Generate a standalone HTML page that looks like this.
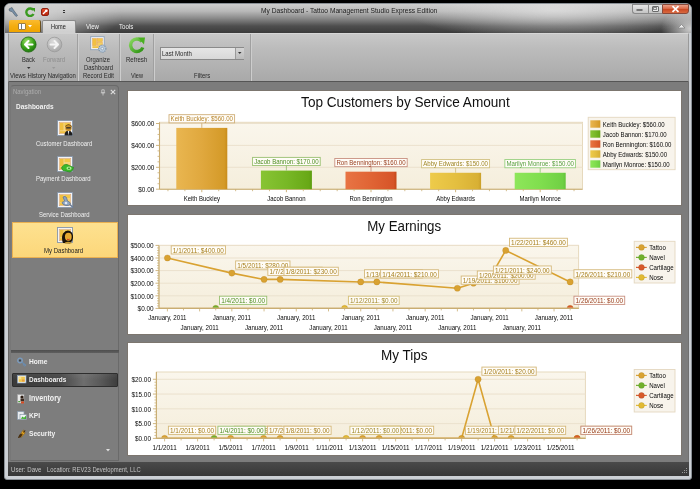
<!DOCTYPE html><html><head><meta charset="utf-8"><style>html,body{margin:0;padding:0}body{width:700px;height:489px;background:#000;position:relative;overflow:hidden;font-family:"Liberation Sans", sans-serif}div{box-sizing:border-box}</style></head><body><div style="position:absolute;left:0;top:0;width:700px;height:489px;will-change:transform"><div style="position:absolute;left:4.00px;top:3.00px;width:688.00px;height:477.00px;background:#ccd0d5;border-radius:6px 6px 3px 3px;border:1px solid #8a9096"></div><div style="position:absolute;left:5.00px;top:4.00px;width:686.00px;height:29.00px;background:linear-gradient(#cdcdcd 0%,#b8b8b8 25%,#888888 50%,#4e4e4e 76%,#3a3a3a 100%);border-radius:5px 5px 0 0"></div><div style="position:absolute;left:5.00px;top:4.00px;width:686.00px;height:29.00px;background:radial-gradient(ellipse 90px 30px at 4% 40%,rgba(215,215,215,0.9),rgba(215,215,215,0) 100%),radial-gradient(ellipse 150px 30px at 80% 20%,rgba(225,225,225,0.8),rgba(225,225,225,0) 100%),radial-gradient(ellipse 30px 22px at 100% 85%,rgba(215,215,215,0.95),rgba(215,215,215,0) 100%);border-radius:5px 5px 0 0"></div><div style="position:absolute;left:260.55px;top:5.88px;font-size:7.97px;line-height:9.57px;color:#1a1a1a;font-weight:normal;white-space:nowrap;transform:scaleX(0.8333);transform-origin:0 50%;">My Dashboard - Tattoo Management Studio Express Edition</div><div style="position:absolute;left:631.50px;top:3.50px;width:16.00px;height:10.50px;background:linear-gradient(#e8e8e8,#c4c4c4);border:1px solid #8a8a8a;border-right:none;border-radius:0 0 0 3px"></div><div style="position:absolute;left:636.00px;top:8.50px;width:7.00px;height:2.00px;background:#f8f8f8;border:1px solid #777;border-radius:1px"></div><div style="position:absolute;left:647.50px;top:3.50px;width:14.50px;height:10.50px;background:linear-gradient(#e8e8e8,#c4c4c4);border:1px solid #8a8a8a;border-right:none"></div><div style="position:absolute;left:651.50px;top:5.50px;width:7.00px;height:6.00px;border:1px solid #6a6a6a;background:#e8e8e8;border-radius:1px"></div><div style="position:absolute;left:653.30px;top:7.30px;width:3.40px;height:2.50px;border:1px solid #8a8a8a"></div><div style="position:absolute;left:662.00px;top:3.50px;width:26.50px;height:10.50px;background:linear-gradient(#eca088,#dc6a48 45%,#cc4a24 55%,#d86a40);border:1px solid #8a4a3a;border-radius:0 0 3px 0"></div><svg style="position:absolute;left:671px;top:4.5px" width="9" height="8"><path d="M1.5 1.2 L7.5 6.8 M7.5 1.2 L1.5 6.8" stroke="#fff" stroke-width="1.7"/></svg><svg style="position:absolute;left:677px;top:23px" width="9" height="6"><path d="M1 5 L4.5 1.5 L8 5 Z" fill="#eee" stroke="#888" stroke-width="0.8"/></svg><svg style="position:absolute;left:7px;top:6px" width="12" height="11"><path d="M2 3 L5 1.5 L6.5 4 L10.5 9.5 L9 10.5 L5 5.5 L2.5 5 Z" fill="#7890a8" stroke="#4a5a6a" stroke-width="0.6"/></svg><svg style="position:absolute;left:25px;top:6.5px" width="11" height="10"><path d="M8.2 3 A3.8 3.8 0 1 0 8.5 7" fill="none" stroke="#3a9a20" stroke-width="2.4"/><path d="M6 1 L10 1 L10 5 Z" fill="#3a9a20"/></svg><div style="position:absolute;left:40.50px;top:7.50px;width:8.50px;height:8.00px;background:linear-gradient(#e84a2a,#b82a10);border-radius:2px;border:1px solid #902010"></div><svg style="position:absolute;left:42px;top:9px" width="6" height="6"><path d="M1 5 L4.5 1.5" stroke="#fff" stroke-width="1.5"/><circle cx="4.3" cy="1.8" r="1.3" fill="#fff"/></svg><div style="position:absolute;left:62.50px;top:10.00px;width:2.50px;height:0.80px;background:#333"></div><div style="position:absolute;left:62.50px;top:12.00px;width:2.50px;height:0.80px;background:#333"></div><div style="position:absolute;left:8.50px;top:19.50px;width:32.00px;height:12.50px;background:linear-gradient(#fbbb30,#f4ad10 50%,#f0a400);border-radius:2px 2px 0 0;border-right:1px solid #6a5020"></div><div style="position:absolute;left:17.50px;top:22.50px;width:8.50px;height:7.00px;background:#fff;border:1px solid #a08040;border-radius:1px"></div><div style="position:absolute;left:21.00px;top:23.50px;width:1.00px;height:5.00px;background:#6a7a8a"></div><svg style="position:absolute;left:27.5px;top:25px" width="5" height="3"><path d="M0 0 L4 0 L2 2.5 Z" fill="#fff"/></svg><div style="position:absolute;left:42.00px;top:20.00px;width:33.50px;height:13.00px;background:linear-gradient(#e2e2e2,#cdcdcd);border:1px solid #8a8a8a;border-bottom:none;border-radius:2px 2px 0 0"></div><div style="position:absolute;left:50.65px;top:22.81px;font-size:6.70px;line-height:8.04px;color:#222;font-weight:normal;white-space:nowrap;transform:scaleX(0.8333);transform-origin:0 50%;">Home</div><div style="position:absolute;left:86.00px;top:22.69px;font-size:7.26px;line-height:8.71px;color:#f4f4f4;font-weight:normal;white-space:nowrap;transform:scaleX(0.8333);transform-origin:0 50%;">View</div><div style="position:absolute;left:119.35px;top:22.64px;font-size:7.35px;line-height:8.82px;color:#f4f4f4;font-weight:normal;white-space:nowrap;transform:scaleX(0.8333);transform-origin:0 50%;">Tools</div><div style="position:absolute;left:8.00px;top:32.50px;width:681.00px;height:49.00px;background:linear-gradient(#c8c8c8,#bcbcbc 30%,#a9a9a9 100%);border-top:1px solid #d6d6d6;border-bottom:1px solid #555;border-left:1px solid #9a9a9a;border-right:1px solid #9a9a9a"></div><div style="position:absolute;left:43.00px;top:32.00px;width:31.50px;height:2.00px;background:#d0d0d0"></div><div style="position:absolute;left:77.00px;top:34.00px;width:1.00px;height:46.50px;background:#a0a0a0"></div><div style="position:absolute;left:78.00px;top:34.00px;width:1.00px;height:46.50px;background:#cdcdcd"></div><div style="position:absolute;left:119.00px;top:34.00px;width:1.00px;height:46.50px;background:#a0a0a0"></div><div style="position:absolute;left:120.00px;top:34.00px;width:1.00px;height:46.50px;background:#cdcdcd"></div><div style="position:absolute;left:153.00px;top:34.00px;width:1.00px;height:46.50px;background:#a0a0a0"></div><div style="position:absolute;left:154.00px;top:34.00px;width:1.00px;height:46.50px;background:#cdcdcd"></div><div style="position:absolute;left:250.00px;top:34.00px;width:1.00px;height:46.50px;background:#a0a0a0"></div><div style="position:absolute;left:251.00px;top:34.00px;width:1.00px;height:46.50px;background:#cdcdcd"></div><svg style="position:absolute;left:20px;top:35.8px" width="17" height="17"><defs><radialGradient id="gb" cx="40%" cy="30%" r="70%"><stop offset="0" stop-color="#9ee06a"/><stop offset="0.6" stop-color="#3ca41a"/><stop offset="1" stop-color="#207a10"/></radialGradient></defs><circle cx="8.5" cy="8.5" r="7.6" fill="url(#gb)" stroke="#1e6a0e" stroke-width="0.8"/><path d="M12.5 8.5 H5.5 M8.5 5 L5 8.5 L8.5 12" fill="none" stroke="#fff" stroke-width="2.1" stroke-linecap="round" stroke-linejoin="round"/></svg><svg style="position:absolute;left:45.7px;top:35.8px" width="17" height="17"><defs><radialGradient id="gf" cx="40%" cy="30%" r="70%"><stop offset="0" stop-color="#dcdcdc"/><stop offset="1" stop-color="#a8a8a8"/></radialGradient></defs><circle cx="8.5" cy="8.5" r="7.3" fill="url(#gf)" stroke="#9a9a9a" stroke-width="0.8"/><path d="M4.5 8.5 H11.5 M8.5 5 L12 8.5 L8.5 12" fill="none" stroke="#f4f4f4" stroke-width="2" stroke-linecap="round" stroke-linejoin="round"/></svg><div style="position:absolute;left:21.75px;top:56.26px;font-size:6.96px;line-height:8.36px;color:#2a2a2a;font-weight:normal;white-space:nowrap;transform:scaleX(0.8333);transform-origin:0 50%;">Back</div><div style="position:absolute;left:42.90px;top:56.09px;font-size:7.26px;line-height:8.72px;color:#8e8e8e;font-weight:normal;white-space:nowrap;transform:scaleX(0.8333);transform-origin:0 50%;">Forward</div><svg style="position:absolute;left:26.5px;top:66.5px" width="4" height="3"><path d="M0 0 L3.5 0 L1.75 2 Z" fill="#333"/></svg><svg style="position:absolute;left:52px;top:66.5px" width="4" height="3"><path d="M0 0 L3.5 0 L1.75 2 Z" fill="#999"/></svg><div style="position:absolute;left:9.70px;top:72.14px;font-size:7.17px;line-height:8.61px;color:#2a2a2a;font-weight:normal;white-space:nowrap;transform:scaleX(0.8333);transform-origin:0 50%;">Views History Navigation</div><svg style="position:absolute;left:90px;top:36px" width="18" height="18"><rect x="0.7" y="0.7" width="13.5" height="13" fill="#f6f6f6" stroke="#8aa0b8" stroke-width="0.9"/><rect x="2.2" y="2.2" width="10.5" height="10" fill="#f6dc98"/><rect x="2.6" y="2.6" width="3.8" height="7" fill="#f2c040" stroke="#e0a060" stroke-width="0.4"/><rect x="7.2" y="2.6" width="5.2" height="3" fill="#f4c848" stroke="#e0a060" stroke-width="0.4"/><rect x="7.2" y="6.3" width="5.2" height="3" fill="#f4d060" stroke="#e0a060" stroke-width="0.4"/><rect x="2.6" y="10.3" width="6" height="1.7" fill="#f0c040"/><circle cx="12.3" cy="12.6" r="3.6" fill="#b8c8d8" stroke="#7890a8" stroke-width="1.1" stroke-dasharray="1.2 0.9"/><circle cx="12.3" cy="12.6" r="1.3" fill="#e8eef4" stroke="#7890a8" stroke-width="0.6"/></svg><div style="position:absolute;left:86.20px;top:56.38px;font-size:7.10px;line-height:8.52px;color:#2a2a2a;font-weight:normal;white-space:nowrap;transform:scaleX(0.8333);transform-origin:0 50%;">Organize</div><div style="position:absolute;left:83.70px;top:63.95px;font-size:7.16px;line-height:8.60px;color:#2a2a2a;font-weight:normal;white-space:nowrap;transform:scaleX(0.8333);transform-origin:0 50%;">Dashboard</div><div style="position:absolute;left:83.00px;top:72.17px;font-size:7.12px;line-height:8.54px;color:#2a2a2a;font-weight:normal;white-space:nowrap;transform:scaleX(0.8333);transform-origin:0 50%;">Record Edit</div><svg style="position:absolute;left:127.5px;top:36px" width="18" height="18"><defs><linearGradient id="gr" x1="0" y1="0" x2="1" y2="1"><stop offset="0" stop-color="#8ad860"/><stop offset="1" stop-color="#2a9010"/></linearGradient></defs><path d="M14 5.5 A6.3 6.3 0 1 0 14.8 11.5" fill="none" stroke="url(#gr)" stroke-width="3.4"/><path d="M10 1.5 L17 1.5 L16 8.5 Z" fill="#4ab020"/></svg><div style="position:absolute;left:125.80px;top:56.29px;font-size:7.27px;line-height:8.72px;color:#2a2a2a;font-weight:normal;white-space:nowrap;transform:scaleX(0.8333);transform-origin:0 50%;">Refresh</div><div style="position:absolute;left:130.90px;top:72.41px;font-size:6.70px;line-height:8.04px;color:#2a2a2a;font-weight:normal;white-space:nowrap;transform:scaleX(0.8333);transform-origin:0 50%;">View</div><div style="position:absolute;left:160.00px;top:47.00px;width:84.00px;height:12.50px;background:linear-gradient(#e6e6e6,#d8d8d8);border:1px solid #8a8a8a"></div><div style="position:absolute;left:235.00px;top:47.50px;width:8.50px;height:11.50px;background:linear-gradient(#d4d4d4,#bcbcbc);border-left:1px solid #9a9a9a"></div><svg style="position:absolute;left:237.5px;top:52px" width="4" height="3"><path d="M0 0 L3.5 0 L1.75 2 Z" fill="#333"/></svg><div style="position:absolute;left:162.10px;top:49.71px;font-size:7.23px;line-height:8.67px;color:#2a2a2a;font-weight:normal;white-space:nowrap;transform:scaleX(0.8333);transform-origin:0 50%;">Last Month</div><div style="position:absolute;left:194.20px;top:72.16px;font-size:7.14px;line-height:8.57px;color:#2a2a2a;font-weight:normal;white-space:nowrap;transform:scaleX(0.8333);transform-origin:0 50%;">Filters</div><div style="position:absolute;left:8.00px;top:81.50px;width:681.00px;height:380.50px;background:#7c7c7c;border-left:1px solid #666;border-right:1px solid #707070"></div><div style="position:absolute;left:9.50px;top:84.50px;width:109.80px;height:376.50px;background:#7d7d7d;border:1px solid #6a6a6a;border-left-color:#777;border-radius:4px 4px 0 0"></div><div style="position:absolute;left:12.90px;top:88.05px;font-size:7.16px;line-height:8.59px;color:#acacac;font-weight:normal;white-space:nowrap;transform:scaleX(0.8333);transform-origin:0 50%;">Navigation</div><svg style="position:absolute;left:99.5px;top:88.5px" width="6" height="7"><path d="M1.8 0.8 H4.2 V3.8 H1.8 Z M0.8 3.8 H5.2 M3 3.8 V6.5" fill="none" stroke="#cfcfcf" stroke-width="0.8"/></svg><svg style="position:absolute;left:109.5px;top:89px" width="6" height="6"><path d="M0.8 0.8 L5.2 5.2 M5.2 0.8 L0.8 5.2" stroke="#dedede" stroke-width="1.1"/></svg><div style="position:absolute;left:16.30px;top:101.67px;font-size:7.81px;line-height:9.37px;color:#f2f2f2;font-weight:bold;white-space:nowrap;transform:scaleX(0.8333);transform-origin:0 50%;">Dashboards</div><svg style="position:absolute;left:56.5px;top:119.5px;overflow:visible" width="17" height="17"><rect x="0.5" y="0.5" width="15" height="15" fill="#f6f8fa" stroke="#8796a8" stroke-width="0.9"/><rect x="2.2" y="2.2" width="11.6" height="11.6" fill="#f2dca0" stroke="#d89a70" stroke-width="0.5"/><rect x="3" y="3" width="3.6" height="7.5" fill="#f0c040"/><rect x="7.4" y="3" width="5.6" height="3.4" fill="#f2c848"/><rect x="7.4" y="7.2" width="5.6" height="3.3" fill="#f4d070"/><rect x="3" y="11.2" width="10" height="1.8" fill="#f0c040"/><path d="M7.5 15.5 Q7.5 11 11.5 10.5 Q15.5 11 15.5 15.5 Z" fill="#1e1e1e"/><path d="M10.8 11 L11.5 15.5 L12.2 11 Z" fill="#f0f0f0"/><circle cx="11.5" cy="7.8" r="3.2" fill="#c8902a"/><path d="M8.3 7 Q11.5 3.2 14.7 7 L14.7 6 Q11.5 2.5 8.3 6 Z" fill="#6a4a10"/><rect x="9.2" y="7.2" width="4.6" height="1.3" fill="#2a2a2a"/></svg><div style="position:absolute;left:35.50px;top:139.67px;font-size:7.12px;line-height:8.55px;color:#f0f0f0;font-weight:normal;white-space:nowrap;transform:scaleX(0.8333);transform-origin:0 50%;">Customer Dashboard</div><svg style="position:absolute;left:56.5px;top:155.5px;overflow:visible" width="17" height="17"><rect x="0.5" y="0.5" width="15" height="15" fill="#f6f8fa" stroke="#8796a8" stroke-width="0.9"/><rect x="2.2" y="2.2" width="11.6" height="11.6" fill="#f2dca0" stroke="#d89a70" stroke-width="0.5"/><rect x="3" y="3" width="3.6" height="7.5" fill="#f0c040"/><rect x="7.4" y="3" width="5.6" height="3.4" fill="#f2c848"/><rect x="7.4" y="7.2" width="5.6" height="3.3" fill="#f4d070"/><rect x="3" y="11.2" width="10" height="1.8" fill="#f0c040"/><path d="M4.5 12 Q6 8 10 8.5 L16.5 11.5 Q16 15 13 16 L6 14.5 Z" fill="#3cb82a" stroke="#208a18" stroke-width="0.7"/><ellipse cx="12" cy="12.3" rx="2.6" ry="1.8" fill="#a8f090"/><circle cx="12" cy="12.3" r="0.9" fill="#2a8a20"/></svg><div style="position:absolute;left:36.40px;top:175.03px;font-size:7.19px;line-height:8.62px;color:#f0f0f0;font-weight:normal;white-space:nowrap;transform:scaleX(0.8333);transform-origin:0 50%;">Payment Dashboard</div><svg style="position:absolute;left:56.5px;top:191.5px;overflow:visible" width="17" height="17"><rect x="0.5" y="0.5" width="15" height="15" fill="#f6f8fa" stroke="#8796a8" stroke-width="0.9"/><rect x="2.2" y="2.2" width="11.6" height="11.6" fill="#f2dca0" stroke="#d89a70" stroke-width="0.5"/><rect x="3" y="3" width="3.6" height="7.5" fill="#f0c040"/><rect x="7.4" y="3" width="5.6" height="3.4" fill="#f2c848"/><rect x="7.4" y="7.2" width="5.6" height="3.3" fill="#f4d070"/><rect x="3" y="11.2" width="10" height="1.8" fill="#f0c040"/><path d="M6 5 Q8 3.5 9.5 5.5 L10.5 9 Q13 9.5 13.5 12 Q12 14 9 13.5 Q5.5 13 5 10.5 Q6.5 9.5 7.5 9 Z" fill="#8ea4c0" stroke="#5a6e8a" stroke-width="0.7"/><circle cx="9" cy="11" r="1.3" fill="#dfe8f4"/><path d="M13 12.5 L16 15.5" stroke="#6a7e9a" stroke-width="1.4"/></svg><div style="position:absolute;left:38.85px;top:211.07px;font-size:7.13px;line-height:8.55px;color:#f0f0f0;font-weight:normal;white-space:nowrap;transform:scaleX(0.8333);transform-origin:0 50%;">Service Dashboard</div><div style="position:absolute;left:11.80px;top:222.00px;width:106.00px;height:35.80px;background:linear-gradient(#fde190,#fcd77a);border:1px solid #eab050"></div><svg style="position:absolute;left:56.5px;top:227.0px;overflow:visible" width="17" height="17"><rect x="0.5" y="0.5" width="15" height="15" fill="#f6f8fa" stroke="#8796a8" stroke-width="0.9"/><rect x="2.2" y="2.2" width="11.6" height="11.6" fill="#f2dca0" stroke="#d89a70" stroke-width="0.5"/><rect x="3" y="3" width="3.6" height="7.5" fill="#f0c040"/><rect x="7.4" y="3" width="5.6" height="3.4" fill="#f2c848"/><rect x="7.4" y="7.2" width="5.6" height="3.3" fill="#f4d070"/><rect x="3" y="11.2" width="10" height="1.8" fill="#f0c040"/><path d="M6 16 Q4 11 6 6.5 Q9 2.5 13 4 Q16.5 6 16 11 Q15.5 15 13 16.5 Z" fill="#1a1208"/><ellipse cx="11.3" cy="9.8" rx="3.4" ry="4" fill="#e6a830"/><path d="M10 12.2 Q11.3 13 12.6 12.2" stroke="#d83a20" stroke-width="1"/><path d="M8 15.5 Q11 14 14.5 15.5 L14.5 16.5 L8 16.5 Z" fill="#c89a30"/></svg><div style="position:absolute;left:44.00px;top:246.60px;font-size:7.23px;line-height:8.68px;color:#222;font-weight:normal;white-space:nowrap;transform:scaleX(0.8333);transform-origin:0 50%;">My Dashboard</div><div style="position:absolute;left:10.50px;top:350.30px;width:108.00px;height:2.50px;background:linear-gradient(#4e4e4e,#5e5e5e)"></div><div style="position:absolute;left:12.00px;top:372.50px;width:106.00px;height:14.50px;background:linear-gradient(rgba(255,255,255,0.06),rgba(255,255,255,0) 50%),linear-gradient(90deg,#3a3a3a,#464646 45%,#6e6e6e 68%,#585858 85%,#3e3e3e);border:1px solid #2e2e2e;border-radius:1px"></div><svg style="position:absolute;left:16.5px;top:356.5px" width="10" height="10"><circle cx="3" cy="3.5" r="2.3" fill="none" stroke="#7a9cc0" stroke-width="1.3"/><circle cx="3" cy="3.5" r="0.9" fill="#2a3a4a"/><path d="M4.8 5 L9 8.5 M7 7 L6 8.5 M8.3 8 L7.5 9.5" stroke="#6a8cb0" stroke-width="1.1"/></svg><svg style="position:absolute;left:16.5px;top:375.0px" width="10" height="10"><rect x="0.5" y="0.5" width="8.5" height="7.5" fill="#f4f6f8" stroke="#8aa0b8" stroke-width="0.7"/><rect x="1.6" y="1.6" width="6.3" height="5.3" fill="#f0c850"/><rect x="2" y="2" width="2.3" height="2.3" fill="#f8e090"/><rect x="5" y="4.5" width="2.5" height="2" fill="#e89a40"/></svg><svg style="position:absolute;left:17.0px;top:393.5px" width="10" height="10"><rect x="0.5" y="0.5" width="6.5" height="8.5" fill="#e8e8e8" stroke="#a0a0a0" stroke-width="0.6"/><circle cx="5" cy="3" r="1.6" fill="#2a1a10"/><rect x="3.5" y="4.5" width="3.5" height="3" fill="#3a2a20"/><rect x="4" y="7.5" width="3" height="2" fill="#d84a20"/><rect x="1.2" y="7" width="2" height="1.2" fill="#50a040"/></svg><svg style="position:absolute;left:16.5px;top:410.5px" width="10" height="10"><rect x="0.5" y="0.5" width="6.5" height="8" fill="#e8ecf0" stroke="#8898a8" stroke-width="0.7"/><rect x="3" y="3.5" width="6.5" height="5" fill="#f0f4f8" stroke="#7a8a9a" stroke-width="0.6"/><path d="M3.8 7.8 L5.5 5.5 L7 6.8 L9 4.5 L9 8 Z" fill="#40b030"/></svg><svg style="position:absolute;left:17.0px;top:428.5px" width="10" height="10"><path d="M1 8.5 Q2 5 4.5 4 L6.5 2 L8.5 1 L7.5 4 L5.5 6.5 Q3.5 9 1 9 Z" fill="#4a3010"/><path d="M6.5 0.8 L3.8 4.8 L5.8 4.8 L4.2 8.6 L8.2 3.6 L6.2 3.6 Z" fill="#f0b020" stroke="#8a5a10" stroke-width="0.4"/></svg><div style="position:absolute;left:29.00px;top:357.37px;font-size:7.99px;line-height:9.59px;color:#f2f2f2;font-weight:bold;white-space:nowrap;transform:scaleX(0.8333);transform-origin:0 50%;">Home</div><div style="position:absolute;left:29.00px;top:375.21px;font-size:7.74px;line-height:9.29px;color:#f2f2f2;font-weight:bold;white-space:nowrap;transform:scaleX(0.8333);transform-origin:0 50%;">Dashboards</div><div style="position:absolute;left:29.00px;top:392.67px;font-size:8.50px;line-height:10.21px;color:#f2f2f2;font-weight:bold;white-space:nowrap;transform:scaleX(0.8333);transform-origin:0 50%;">Inventory</div><div style="position:absolute;left:29.00px;top:411.11px;font-size:7.92px;line-height:9.50px;color:#f2f2f2;font-weight:bold;white-space:nowrap;transform:scaleX(0.8333);transform-origin:0 50%;">KPI</div><div style="position:absolute;left:29.00px;top:428.98px;font-size:7.97px;line-height:9.56px;color:#f2f2f2;font-weight:bold;white-space:nowrap;transform:scaleX(0.8333);transform-origin:0 50%;">Security</div><svg style="position:absolute;left:106px;top:449px" width="5" height="3"><path d="M0 0 L4 0 L2 2.5 Z" fill="#e0e0e0"/></svg><div style="position:absolute;left:126.50px;top:89.50px;width:555.00px;height:116.50px;background:#fff;border:1px solid #7c766f"></div><div style="position:absolute;left:126.50px;top:213.50px;width:555.00px;height:121.00px;background:#fff;border:1px solid #7c766f"></div><div style="position:absolute;left:126.50px;top:342.00px;width:555.00px;height:113.50px;background:#fff;border:1px solid #7c766f"></div><svg style="position:absolute;left:0;top:0;font-family:'Liberation Sans',sans-serif;will-change:transform" width="700" height="489"><defs><linearGradient id="pbg" x1="0" y1="0" x2="0" y2="1"><stop offset="0" stop-color="#faf6ec"/><stop offset="1" stop-color="#f5eedc"/></linearGradient><linearGradient id="bk" x1="0" y1="0" x2="1" y2="0"><stop offset="0" stop-color="#e9b650"/><stop offset="0.5" stop-color="#e0a83e"/><stop offset="0.94" stop-color="#d49a28"/><stop offset="1" stop-color="#c88c1c"/></linearGradient><linearGradient id="bj" x1="0" y1="0" x2="1" y2="0"><stop offset="0" stop-color="#88c434"/><stop offset="0.5" stop-color="#78b826"/><stop offset="0.94" stop-color="#68a816"/><stop offset="1" stop-color="#5c9c10"/></linearGradient><linearGradient id="br" x1="0" y1="0" x2="1" y2="0"><stop offset="0" stop-color="#e87444"/><stop offset="0.5" stop-color="#e06434"/><stop offset="0.94" stop-color="#d65428"/><stop offset="1" stop-color="#c44818"/></linearGradient><linearGradient id="ba" x1="0" y1="0" x2="1" y2="0"><stop offset="0" stop-color="#eecb4a"/><stop offset="0.5" stop-color="#e4bf40"/><stop offset="0.94" stop-color="#d8b034"/><stop offset="1" stop-color="#caa02a"/></linearGradient><linearGradient id="bm" x1="0" y1="0" x2="1" y2="0"><stop offset="0" stop-color="#8ee65a"/><stop offset="0.5" stop-color="#80de4e"/><stop offset="0.94" stop-color="#70d044"/><stop offset="1" stop-color="#64c43a"/></linearGradient><clipPath id="clip2"><rect x="159" y="245.4" width="419.6" height="62.4"/></clipPath><clipPath id="clip3"><rect x="156.4" y="372" width="429" height="65.8"/></clipPath></defs><text x="405.40" y="107.42" font-size="14.50" fill="#111" text-anchor="middle" font-weight="normal" textLength="208.60" lengthAdjust="spacingAndGlyphs">Top Customers by Service Amount</text><rect x="159.50" y="122.30" width="423.00" height="66.90" fill="url(#pbg)" stroke="#e6d9bd" stroke-width="1"/><line x1="159.50" y1="167.30" x2="582.50" y2="167.30" stroke="#ebe1cd" stroke-width="1"/><line x1="159.50" y1="145.40" x2="582.50" y2="145.40" stroke="#ebe1cd" stroke-width="1"/><line x1="159.50" y1="123.50" x2="582.50" y2="123.50" stroke="#ebe1cd" stroke-width="1"/><text x="154.30" y="191.96" font-size="7.68" fill="#0a0a0a" text-anchor="end" font-weight="normal" textLength="16.02" lengthAdjust="spacingAndGlyphs">$0.00</text><line x1="156" y1="189.20" x2="159.50" y2="189.20" stroke="#c9ad72" stroke-width="0.9"/><text x="154.30" y="170.06" font-size="7.68" fill="#0a0a0a" text-anchor="end" font-weight="normal" textLength="23.13" lengthAdjust="spacingAndGlyphs">$200.00</text><line x1="156" y1="167.30" x2="159.50" y2="167.30" stroke="#c9ad72" stroke-width="0.9"/><text x="154.30" y="148.16" font-size="7.68" fill="#0a0a0a" text-anchor="end" font-weight="normal" textLength="23.13" lengthAdjust="spacingAndGlyphs">$400.00</text><line x1="156" y1="145.40" x2="159.50" y2="145.40" stroke="#c9ad72" stroke-width="0.9"/><text x="154.30" y="126.26" font-size="7.68" fill="#0a0a0a" text-anchor="end" font-weight="normal" textLength="23.13" lengthAdjust="spacingAndGlyphs">$600.00</text><line x1="156" y1="123.50" x2="159.50" y2="123.50" stroke="#c9ad72" stroke-width="0.9"/><line x1="157.5" y1="183.72" x2="159.50" y2="183.72" stroke="#c9ad72" stroke-width="0.8"/><line x1="157.5" y1="178.25" x2="159.50" y2="178.25" stroke="#c9ad72" stroke-width="0.8"/><line x1="157.5" y1="172.77" x2="159.50" y2="172.77" stroke="#c9ad72" stroke-width="0.8"/><line x1="157.5" y1="161.82" x2="159.50" y2="161.82" stroke="#c9ad72" stroke-width="0.8"/><line x1="157.5" y1="156.35" x2="159.50" y2="156.35" stroke="#c9ad72" stroke-width="0.8"/><line x1="157.5" y1="150.88" x2="159.50" y2="150.88" stroke="#c9ad72" stroke-width="0.8"/><line x1="157.5" y1="139.93" x2="159.50" y2="139.93" stroke="#c9ad72" stroke-width="0.8"/><line x1="157.5" y1="134.45" x2="159.50" y2="134.45" stroke="#c9ad72" stroke-width="0.8"/><line x1="157.5" y1="128.97" x2="159.50" y2="128.97" stroke="#c9ad72" stroke-width="0.8"/><line x1="159.50" y1="122.30" x2="159.50" y2="189.20" stroke="#c9ad72" stroke-width="1.1"/><line x1="159.50" y1="189.20" x2="582.50" y2="189.20" stroke="#c9ad72" stroke-width="1.1"/><rect x="176.30" y="127.88" width="51.00" height="61.32" fill="url(#bk)"/><text x="201.80" y="200.99" font-size="7.20" fill="#0a0a0a" text-anchor="middle" font-weight="normal" textLength="36.35" lengthAdjust="spacingAndGlyphs">Keith Buckley</text><line x1="201.80" y1="189.20" x2="201.80" y2="192.20" stroke="#c9ad72" stroke-width="0.9"/><line x1="167.96" y1="189.20" x2="167.96" y2="191.20" stroke="#c9ad72" stroke-width="0.8"/><line x1="184.88" y1="189.20" x2="184.88" y2="191.20" stroke="#c9ad72" stroke-width="0.8"/><line x1="218.72" y1="189.20" x2="218.72" y2="191.20" stroke="#c9ad72" stroke-width="0.8"/><line x1="235.64" y1="189.20" x2="235.64" y2="191.20" stroke="#c9ad72" stroke-width="0.8"/><line x1="201.80" y1="122.88" x2="201.80" y2="127.88" stroke="#d0b07a" stroke-width="0.9"/><rect x="169.00" y="114.68" width="65.60" height="8.20" fill="#fffdf8" fill-opacity="0.92" stroke="#d0b07a" stroke-width="0.9"/><text x="170.60" y="121.42" font-size="7.32" fill="#b8862e" text-anchor="start" font-weight="normal" textLength="62.40" lengthAdjust="spacingAndGlyphs">Keith Buckley: $560.00</text><rect x="260.90" y="170.58" width="51.00" height="18.62" fill="url(#bj)"/><text x="286.40" y="200.99" font-size="7.20" fill="#0a0a0a" text-anchor="middle" font-weight="normal" textLength="38.36" lengthAdjust="spacingAndGlyphs">Jacob Bannon</text><line x1="286.40" y1="189.20" x2="286.40" y2="192.20" stroke="#c9ad72" stroke-width="0.9"/><line x1="252.56" y1="189.20" x2="252.56" y2="191.20" stroke="#c9ad72" stroke-width="0.8"/><line x1="269.48" y1="189.20" x2="269.48" y2="191.20" stroke="#c9ad72" stroke-width="0.8"/><line x1="303.32" y1="189.20" x2="303.32" y2="191.20" stroke="#c9ad72" stroke-width="0.8"/><line x1="320.24" y1="189.20" x2="320.24" y2="191.20" stroke="#c9ad72" stroke-width="0.8"/><line x1="286.40" y1="165.58" x2="286.40" y2="170.58" stroke="#98c070" stroke-width="0.9"/><rect x="252.58" y="157.38" width="67.64" height="8.20" fill="#fffdf8" fill-opacity="0.92" stroke="#98c070" stroke-width="0.9"/><text x="254.18" y="164.12" font-size="7.32" fill="#4e8e22" text-anchor="start" font-weight="normal" textLength="64.44" lengthAdjust="spacingAndGlyphs">Jacob Bannon: $170.00</text><rect x="345.50" y="171.68" width="51.00" height="17.52" fill="url(#br)"/><text x="371.00" y="200.99" font-size="7.20" fill="#0a0a0a" text-anchor="middle" font-weight="normal" textLength="43.03" lengthAdjust="spacingAndGlyphs">Ron Bennington</text><line x1="371.00" y1="189.20" x2="371.00" y2="192.20" stroke="#c9ad72" stroke-width="0.9"/><line x1="337.16" y1="189.20" x2="337.16" y2="191.20" stroke="#c9ad72" stroke-width="0.8"/><line x1="354.08" y1="189.20" x2="354.08" y2="191.20" stroke="#c9ad72" stroke-width="0.8"/><line x1="387.92" y1="189.20" x2="387.92" y2="191.20" stroke="#c9ad72" stroke-width="0.8"/><line x1="404.84" y1="189.20" x2="404.84" y2="191.20" stroke="#c9ad72" stroke-width="0.8"/><line x1="371.00" y1="166.68" x2="371.00" y2="171.68" stroke="#c89080" stroke-width="0.9"/><rect x="334.80" y="158.48" width="72.39" height="8.20" fill="#fffdf8" fill-opacity="0.92" stroke="#c89080" stroke-width="0.9"/><text x="336.40" y="165.22" font-size="7.32" fill="#9a4020" text-anchor="start" font-weight="normal" textLength="69.19" lengthAdjust="spacingAndGlyphs">Ron Bennington: $160.00</text><rect x="430.10" y="172.77" width="51.00" height="16.43" fill="url(#ba)"/><text x="455.60" y="200.99" font-size="7.20" fill="#0a0a0a" text-anchor="middle" font-weight="normal" textLength="38.69" lengthAdjust="spacingAndGlyphs">Abby Edwards</text><line x1="455.60" y1="189.20" x2="455.60" y2="192.20" stroke="#c9ad72" stroke-width="0.9"/><line x1="421.76" y1="189.20" x2="421.76" y2="191.20" stroke="#c9ad72" stroke-width="0.8"/><line x1="438.68" y1="189.20" x2="438.68" y2="191.20" stroke="#c9ad72" stroke-width="0.8"/><line x1="472.52" y1="189.20" x2="472.52" y2="191.20" stroke="#c9ad72" stroke-width="0.8"/><line x1="489.44" y1="189.20" x2="489.44" y2="191.20" stroke="#c9ad72" stroke-width="0.8"/><line x1="455.60" y1="167.77" x2="455.60" y2="172.77" stroke="#d0c080" stroke-width="0.9"/><rect x="421.61" y="159.57" width="67.97" height="8.20" fill="#fffdf8" fill-opacity="0.92" stroke="#d0c080" stroke-width="0.9"/><text x="423.21" y="166.31" font-size="7.32" fill="#a08828" text-anchor="start" font-weight="normal" textLength="64.77" lengthAdjust="spacingAndGlyphs">Abby Edwards: $150.00</text><rect x="514.70" y="172.77" width="51.00" height="16.43" fill="url(#bm)"/><text x="540.20" y="200.99" font-size="7.20" fill="#0a0a0a" text-anchor="middle" font-weight="normal" textLength="41.35" lengthAdjust="spacingAndGlyphs">Marilyn Monroe</text><line x1="540.20" y1="189.20" x2="540.20" y2="192.20" stroke="#c9ad72" stroke-width="0.9"/><line x1="506.36" y1="189.20" x2="506.36" y2="191.20" stroke="#c9ad72" stroke-width="0.8"/><line x1="523.28" y1="189.20" x2="523.28" y2="191.20" stroke="#c9ad72" stroke-width="0.8"/><line x1="557.12" y1="189.20" x2="557.12" y2="191.20" stroke="#c9ad72" stroke-width="0.8"/><line x1="574.04" y1="189.20" x2="574.04" y2="191.20" stroke="#c9ad72" stroke-width="0.8"/><line x1="540.20" y1="167.77" x2="540.20" y2="172.77" stroke="#98d080" stroke-width="0.9"/><rect x="504.86" y="159.57" width="70.68" height="8.20" fill="#fffdf8" fill-opacity="0.92" stroke="#98d080" stroke-width="0.9"/><text x="506.46" y="166.31" font-size="7.32" fill="#58a040" text-anchor="start" font-weight="normal" textLength="67.48" lengthAdjust="spacingAndGlyphs">Marilyn Monroe: $150.00</text><rect x="588.2" y="117.3" width="86.9" height="52.4" fill="#f8f4ec" stroke="#e4d8c0" stroke-width="0.9"/><rect x="590.3" y="120.30" width="10" height="7.4" fill="url(#bk)"/><text x="602.80" y="126.61" font-size="7.26" fill="#0a0a0a" text-anchor="start" font-weight="normal" textLength="61.89" lengthAdjust="spacingAndGlyphs">Keith Buckley: $560.00</text><rect x="590.3" y="130.30" width="10" height="7.4" fill="url(#bj)"/><text x="602.80" y="136.61" font-size="7.26" fill="#0a0a0a" text-anchor="start" font-weight="normal" textLength="63.91" lengthAdjust="spacingAndGlyphs">Jacob Bannon: $170.00</text><rect x="590.3" y="140.30" width="10" height="7.4" fill="url(#br)"/><text x="602.80" y="146.61" font-size="7.26" fill="#0a0a0a" text-anchor="start" font-weight="normal" textLength="68.62" lengthAdjust="spacingAndGlyphs">Ron Bennington: $160.00</text><rect x="590.3" y="150.30" width="10" height="7.4" fill="url(#ba)"/><text x="602.80" y="156.61" font-size="7.26" fill="#0a0a0a" text-anchor="start" font-weight="normal" textLength="64.24" lengthAdjust="spacingAndGlyphs">Abby Edwards: $150.00</text><rect x="590.3" y="160.30" width="10" height="7.4" fill="url(#bm)"/><text x="602.80" y="166.61" font-size="7.26" fill="#0a0a0a" text-anchor="start" font-weight="normal" textLength="66.92" lengthAdjust="spacingAndGlyphs">Marilyn Monroe: $150.00</text><text x="404.20" y="230.72" font-size="14.23" fill="#111" text-anchor="middle" font-weight="normal" textLength="73.92" lengthAdjust="spacingAndGlyphs">My Earnings</text><rect x="159.00" y="245.40" width="419.60" height="63.00" fill="url(#pbg)" stroke="#e6d9bd" stroke-width="1"/><line x1="159.00" y1="295.80" x2="578.60" y2="295.80" stroke="#ebe1cd" stroke-width="1"/><line x1="159.00" y1="283.20" x2="578.60" y2="283.20" stroke="#ebe1cd" stroke-width="1"/><line x1="159.00" y1="270.60" x2="578.60" y2="270.60" stroke="#ebe1cd" stroke-width="1"/><line x1="159.00" y1="258.00" x2="578.60" y2="258.00" stroke="#ebe1cd" stroke-width="1"/><line x1="159.00" y1="245.40" x2="578.60" y2="245.40" stroke="#ebe1cd" stroke-width="1"/><text x="153.60" y="311.16" font-size="7.68" fill="#0a0a0a" text-anchor="end" font-weight="normal" textLength="16.02" lengthAdjust="spacingAndGlyphs">$0.00</text><line x1="155.50" y1="308.40" x2="159.00" y2="308.40" stroke="#c9ad72" stroke-width="0.9"/><line x1="157.00" y1="305.88" x2="159.00" y2="305.88" stroke="#c9ad72" stroke-width="0.7"/><line x1="157.00" y1="303.36" x2="159.00" y2="303.36" stroke="#c9ad72" stroke-width="0.7"/><line x1="157.00" y1="300.84" x2="159.00" y2="300.84" stroke="#c9ad72" stroke-width="0.7"/><line x1="157.00" y1="298.32" x2="159.00" y2="298.32" stroke="#c9ad72" stroke-width="0.7"/><text x="153.60" y="298.56" font-size="7.68" fill="#0a0a0a" text-anchor="end" font-weight="normal" textLength="23.13" lengthAdjust="spacingAndGlyphs">$100.00</text><line x1="155.50" y1="295.80" x2="159.00" y2="295.80" stroke="#c9ad72" stroke-width="0.9"/><line x1="157.00" y1="293.28" x2="159.00" y2="293.28" stroke="#c9ad72" stroke-width="0.7"/><line x1="157.00" y1="290.76" x2="159.00" y2="290.76" stroke="#c9ad72" stroke-width="0.7"/><line x1="157.00" y1="288.24" x2="159.00" y2="288.24" stroke="#c9ad72" stroke-width="0.7"/><line x1="157.00" y1="285.72" x2="159.00" y2="285.72" stroke="#c9ad72" stroke-width="0.7"/><text x="153.60" y="285.96" font-size="7.68" fill="#0a0a0a" text-anchor="end" font-weight="normal" textLength="23.13" lengthAdjust="spacingAndGlyphs">$200.00</text><line x1="155.50" y1="283.20" x2="159.00" y2="283.20" stroke="#c9ad72" stroke-width="0.9"/><line x1="157.00" y1="280.68" x2="159.00" y2="280.68" stroke="#c9ad72" stroke-width="0.7"/><line x1="157.00" y1="278.16" x2="159.00" y2="278.16" stroke="#c9ad72" stroke-width="0.7"/><line x1="157.00" y1="275.64" x2="159.00" y2="275.64" stroke="#c9ad72" stroke-width="0.7"/><line x1="157.00" y1="273.12" x2="159.00" y2="273.12" stroke="#c9ad72" stroke-width="0.7"/><text x="153.60" y="273.36" font-size="7.68" fill="#0a0a0a" text-anchor="end" font-weight="normal" textLength="23.13" lengthAdjust="spacingAndGlyphs">$300.00</text><line x1="155.50" y1="270.60" x2="159.00" y2="270.60" stroke="#c9ad72" stroke-width="0.9"/><line x1="157.00" y1="268.08" x2="159.00" y2="268.08" stroke="#c9ad72" stroke-width="0.7"/><line x1="157.00" y1="265.56" x2="159.00" y2="265.56" stroke="#c9ad72" stroke-width="0.7"/><line x1="157.00" y1="263.04" x2="159.00" y2="263.04" stroke="#c9ad72" stroke-width="0.7"/><line x1="157.00" y1="260.52" x2="159.00" y2="260.52" stroke="#c9ad72" stroke-width="0.7"/><text x="153.60" y="260.76" font-size="7.68" fill="#0a0a0a" text-anchor="end" font-weight="normal" textLength="23.13" lengthAdjust="spacingAndGlyphs">$400.00</text><line x1="155.50" y1="258.00" x2="159.00" y2="258.00" stroke="#c9ad72" stroke-width="0.9"/><line x1="157.00" y1="255.48" x2="159.00" y2="255.48" stroke="#c9ad72" stroke-width="0.7"/><line x1="157.00" y1="252.96" x2="159.00" y2="252.96" stroke="#c9ad72" stroke-width="0.7"/><line x1="157.00" y1="250.44" x2="159.00" y2="250.44" stroke="#c9ad72" stroke-width="0.7"/><line x1="157.00" y1="247.92" x2="159.00" y2="247.92" stroke="#c9ad72" stroke-width="0.7"/><text x="153.60" y="248.16" font-size="7.68" fill="#0a0a0a" text-anchor="end" font-weight="normal" textLength="23.13" lengthAdjust="spacingAndGlyphs">$500.00</text><line x1="155.50" y1="245.40" x2="159.00" y2="245.40" stroke="#c9ad72" stroke-width="0.9"/><line x1="159.00" y1="245.40" x2="159.00" y2="308.40" stroke="#c9ad72" stroke-width="1.1"/><line x1="159.00" y1="308.40" x2="578.60" y2="308.40" stroke="#c9ad72" stroke-width="1.1"/><line x1="167.40" y1="308.40" x2="167.40" y2="311.40" stroke="#c9ad72" stroke-width="0.8"/><line x1="183.51" y1="308.40" x2="183.51" y2="310.40" stroke="#c9ad72" stroke-width="0.8"/><line x1="199.62" y1="308.40" x2="199.62" y2="311.40" stroke="#c9ad72" stroke-width="0.8"/><line x1="215.73" y1="308.40" x2="215.73" y2="310.40" stroke="#c9ad72" stroke-width="0.8"/><line x1="231.84" y1="308.40" x2="231.84" y2="311.40" stroke="#c9ad72" stroke-width="0.8"/><line x1="247.95" y1="308.40" x2="247.95" y2="310.40" stroke="#c9ad72" stroke-width="0.8"/><line x1="264.06" y1="308.40" x2="264.06" y2="311.40" stroke="#c9ad72" stroke-width="0.8"/><line x1="280.17" y1="308.40" x2="280.17" y2="310.40" stroke="#c9ad72" stroke-width="0.8"/><line x1="296.28" y1="308.40" x2="296.28" y2="311.40" stroke="#c9ad72" stroke-width="0.8"/><line x1="312.39" y1="308.40" x2="312.39" y2="310.40" stroke="#c9ad72" stroke-width="0.8"/><line x1="328.50" y1="308.40" x2="328.50" y2="311.40" stroke="#c9ad72" stroke-width="0.8"/><line x1="344.61" y1="308.40" x2="344.61" y2="310.40" stroke="#c9ad72" stroke-width="0.8"/><line x1="360.72" y1="308.40" x2="360.72" y2="311.40" stroke="#c9ad72" stroke-width="0.8"/><line x1="376.83" y1="308.40" x2="376.83" y2="310.40" stroke="#c9ad72" stroke-width="0.8"/><line x1="392.94" y1="308.40" x2="392.94" y2="311.40" stroke="#c9ad72" stroke-width="0.8"/><line x1="409.05" y1="308.40" x2="409.05" y2="310.40" stroke="#c9ad72" stroke-width="0.8"/><line x1="425.16" y1="308.40" x2="425.16" y2="311.40" stroke="#c9ad72" stroke-width="0.8"/><line x1="441.27" y1="308.40" x2="441.27" y2="310.40" stroke="#c9ad72" stroke-width="0.8"/><line x1="457.38" y1="308.40" x2="457.38" y2="311.40" stroke="#c9ad72" stroke-width="0.8"/><line x1="473.49" y1="308.40" x2="473.49" y2="310.40" stroke="#c9ad72" stroke-width="0.8"/><line x1="489.60" y1="308.40" x2="489.60" y2="311.40" stroke="#c9ad72" stroke-width="0.8"/><line x1="505.71" y1="308.40" x2="505.71" y2="310.40" stroke="#c9ad72" stroke-width="0.8"/><line x1="521.82" y1="308.40" x2="521.82" y2="311.40" stroke="#c9ad72" stroke-width="0.8"/><line x1="537.93" y1="308.40" x2="537.93" y2="310.40" stroke="#c9ad72" stroke-width="0.8"/><line x1="554.04" y1="308.40" x2="554.04" y2="311.40" stroke="#c9ad72" stroke-width="0.8"/><line x1="570.15" y1="308.40" x2="570.15" y2="310.40" stroke="#c9ad72" stroke-width="0.8"/><text x="167.40" y="319.58" font-size="7.44" fill="#0a0a0a" text-anchor="middle" font-weight="normal" textLength="38.37" lengthAdjust="spacingAndGlyphs">January, 2011</text><text x="199.62" y="329.78" font-size="7.44" fill="#0a0a0a" text-anchor="middle" font-weight="normal" textLength="38.37" lengthAdjust="spacingAndGlyphs">January, 2011</text><text x="231.84" y="319.58" font-size="7.44" fill="#0a0a0a" text-anchor="middle" font-weight="normal" textLength="38.37" lengthAdjust="spacingAndGlyphs">January, 2011</text><text x="264.06" y="329.78" font-size="7.44" fill="#0a0a0a" text-anchor="middle" font-weight="normal" textLength="38.37" lengthAdjust="spacingAndGlyphs">January, 2011</text><text x="296.28" y="319.58" font-size="7.44" fill="#0a0a0a" text-anchor="middle" font-weight="normal" textLength="38.37" lengthAdjust="spacingAndGlyphs">January, 2011</text><text x="328.50" y="329.78" font-size="7.44" fill="#0a0a0a" text-anchor="middle" font-weight="normal" textLength="38.37" lengthAdjust="spacingAndGlyphs">January, 2011</text><text x="360.72" y="319.58" font-size="7.44" fill="#0a0a0a" text-anchor="middle" font-weight="normal" textLength="38.37" lengthAdjust="spacingAndGlyphs">January, 2011</text><text x="392.94" y="329.78" font-size="7.44" fill="#0a0a0a" text-anchor="middle" font-weight="normal" textLength="38.37" lengthAdjust="spacingAndGlyphs">January, 2011</text><text x="425.16" y="319.58" font-size="7.44" fill="#0a0a0a" text-anchor="middle" font-weight="normal" textLength="38.37" lengthAdjust="spacingAndGlyphs">January, 2011</text><text x="457.38" y="329.78" font-size="7.44" fill="#0a0a0a" text-anchor="middle" font-weight="normal" textLength="38.37" lengthAdjust="spacingAndGlyphs">January, 2011</text><text x="489.60" y="319.58" font-size="7.44" fill="#0a0a0a" text-anchor="middle" font-weight="normal" textLength="38.37" lengthAdjust="spacingAndGlyphs">January, 2011</text><text x="521.82" y="329.78" font-size="7.44" fill="#0a0a0a" text-anchor="middle" font-weight="normal" textLength="38.37" lengthAdjust="spacingAndGlyphs">January, 2011</text><text x="554.04" y="319.58" font-size="7.44" fill="#0a0a0a" text-anchor="middle" font-weight="normal" textLength="38.37" lengthAdjust="spacingAndGlyphs">January, 2011</text><g clip-path="url(#clip2)"><polyline points="167.40,258.00 231.84,273.12 264.06,279.42 280.17,279.42 360.72,281.94 376.83,281.94 457.38,288.24 473.49,283.20 489.60,278.16 505.71,250.44 570.15,281.94" fill="none" stroke="#d9a232" stroke-width="1.6" stroke-linejoin="round"/><circle cx="167.40" cy="258.00" r="3.1" fill="#d9a232" stroke="#b07a18" stroke-width="0.5" stroke-opacity="0.5"/><circle cx="231.84" cy="273.12" r="3.1" fill="#d9a232" stroke="#b07a18" stroke-width="0.5" stroke-opacity="0.5"/><circle cx="264.06" cy="279.42" r="3.1" fill="#d9a232" stroke="#b07a18" stroke-width="0.5" stroke-opacity="0.5"/><circle cx="280.17" cy="279.42" r="3.1" fill="#d9a232" stroke="#b07a18" stroke-width="0.5" stroke-opacity="0.5"/><circle cx="360.72" cy="281.94" r="3.1" fill="#d9a232" stroke="#b07a18" stroke-width="0.5" stroke-opacity="0.5"/><circle cx="376.83" cy="281.94" r="3.1" fill="#d9a232" stroke="#b07a18" stroke-width="0.5" stroke-opacity="0.5"/><circle cx="457.38" cy="288.24" r="3.1" fill="#d9a232" stroke="#b07a18" stroke-width="0.5" stroke-opacity="0.5"/><circle cx="473.49" cy="283.20" r="3.1" fill="#d9a232" stroke="#b07a18" stroke-width="0.5" stroke-opacity="0.5"/><circle cx="489.60" cy="278.16" r="3.1" fill="#d9a232" stroke="#b07a18" stroke-width="0.5" stroke-opacity="0.5"/><circle cx="505.71" cy="250.44" r="3.1" fill="#d9a232" stroke="#b07a18" stroke-width="0.5" stroke-opacity="0.5"/><circle cx="570.15" cy="281.94" r="3.1" fill="#d9a232" stroke="#b07a18" stroke-width="0.5" stroke-opacity="0.5"/><circle cx="215.73" cy="308.40" r="3.1" fill="#72b02c" stroke="#b07a18" stroke-width="0.5" stroke-opacity="0.5"/><circle cx="570.15" cy="308.40" r="3.1" fill="#d85a2a" stroke="#b07a18" stroke-width="0.5" stroke-opacity="0.5"/><circle cx="344.61" cy="308.40" r="3.1" fill="#e2ba32" stroke="#b07a18" stroke-width="0.5" stroke-opacity="0.5"/></g><line x1="159.00" y1="308.40" x2="578.60" y2="308.40" stroke="#c9ad72" stroke-width="1.1"/><rect x="171.20" y="245.80" width="54.33" height="8.20" fill="#fffdf8" fill-opacity="0.92" stroke="#d4b87a" stroke-width="0.9"/><text x="172.80" y="252.66" font-size="7.68" fill="#a8801e" text-anchor="start" font-weight="normal" textLength="51.13" lengthAdjust="spacingAndGlyphs">1/1/2011: $400.00</text><rect x="235.64" y="260.92" width="54.33" height="8.20" fill="#fffdf8" fill-opacity="0.92" stroke="#d4b87a" stroke-width="0.9"/><text x="237.24" y="267.78" font-size="7.68" fill="#a8801e" text-anchor="start" font-weight="normal" textLength="51.13" lengthAdjust="spacingAndGlyphs">1/5/2011: $280.00</text><rect x="267.86" y="267.22" width="54.33" height="8.20" fill="#fffdf8" fill-opacity="0.92" stroke="#d4b87a" stroke-width="0.9"/><text x="269.46" y="274.08" font-size="7.68" fill="#a8801e" text-anchor="start" font-weight="normal" textLength="51.13" lengthAdjust="spacingAndGlyphs">1/7/2011: $230.00</text><rect x="283.97" y="267.22" width="54.33" height="8.20" fill="#fffdf8" fill-opacity="0.92" stroke="#d4b87a" stroke-width="0.9"/><text x="285.57" y="274.08" font-size="7.68" fill="#a8801e" text-anchor="start" font-weight="normal" textLength="51.13" lengthAdjust="spacingAndGlyphs">1/8/2011: $230.00</text><rect x="364.52" y="269.74" width="57.89" height="8.20" fill="#fffdf8" fill-opacity="0.92" stroke="#d4b87a" stroke-width="0.9"/><text x="366.12" y="276.60" font-size="7.68" fill="#a8801e" text-anchor="start" font-weight="normal" textLength="54.69" lengthAdjust="spacingAndGlyphs">1/13/2011: $210.00</text><rect x="380.63" y="269.74" width="57.89" height="8.20" fill="#fffdf8" fill-opacity="0.92" stroke="#d4b87a" stroke-width="0.9"/><text x="382.23" y="276.60" font-size="7.68" fill="#a8801e" text-anchor="start" font-weight="normal" textLength="54.69" lengthAdjust="spacingAndGlyphs">1/14/2011: $210.00</text><rect x="461.18" y="276.04" width="57.89" height="8.20" fill="#fffdf8" fill-opacity="0.92" stroke="#d4b87a" stroke-width="0.9"/><text x="462.78" y="282.90" font-size="7.68" fill="#a8801e" text-anchor="start" font-weight="normal" textLength="54.69" lengthAdjust="spacingAndGlyphs">1/19/2011: $160.00</text><rect x="477.29" y="271.00" width="57.89" height="8.20" fill="#fffdf8" fill-opacity="0.92" stroke="#d4b87a" stroke-width="0.9"/><text x="478.89" y="277.86" font-size="7.68" fill="#a8801e" text-anchor="start" font-weight="normal" textLength="54.69" lengthAdjust="spacingAndGlyphs">1/20/2011: $200.00</text><rect x="493.40" y="265.96" width="57.89" height="8.20" fill="#fffdf8" fill-opacity="0.92" stroke="#d4b87a" stroke-width="0.9"/><text x="495.00" y="272.82" font-size="7.68" fill="#a8801e" text-anchor="start" font-weight="normal" textLength="54.69" lengthAdjust="spacingAndGlyphs">1/21/2011: $240.00</text><rect x="509.51" y="238.24" width="57.89" height="8.20" fill="#fffdf8" fill-opacity="0.92" stroke="#d4b87a" stroke-width="0.9"/><text x="511.11" y="245.10" font-size="7.68" fill="#a8801e" text-anchor="start" font-weight="normal" textLength="54.69" lengthAdjust="spacingAndGlyphs">1/22/2011: $460.00</text><rect x="573.95" y="269.74" width="57.89" height="8.20" fill="#fffdf8" fill-opacity="0.92" stroke="#d4b87a" stroke-width="0.9"/><text x="575.55" y="276.60" font-size="7.68" fill="#a8801e" text-anchor="start" font-weight="normal" textLength="54.69" lengthAdjust="spacingAndGlyphs">1/26/2011: $210.00</text><rect x="219.53" y="296.20" width="47.21" height="8.20" fill="#fffdf8" fill-opacity="0.92" stroke="#98c070" stroke-width="0.9"/><text x="221.13" y="303.06" font-size="7.68" fill="#4e8e22" text-anchor="start" font-weight="normal" textLength="44.01" lengthAdjust="spacingAndGlyphs">1/4/2011: $0.00</text><rect x="573.95" y="296.20" width="50.77" height="8.20" fill="#fffdf8" fill-opacity="0.92" stroke="#c89080" stroke-width="0.9"/><text x="575.55" y="303.06" font-size="7.68" fill="#9a4020" text-anchor="start" font-weight="normal" textLength="47.57" lengthAdjust="spacingAndGlyphs">1/26/2011: $0.00</text><rect x="348.41" y="296.20" width="50.77" height="8.20" fill="#fffdf8" fill-opacity="0.92" stroke="#d4c07a" stroke-width="0.9"/><text x="350.01" y="303.06" font-size="7.68" fill="#a08828" text-anchor="start" font-weight="normal" textLength="47.57" lengthAdjust="spacingAndGlyphs">1/12/2011: $0.00</text><rect x="634.20" y="241.30" width="40.80" height="41.70" fill="#f8f4ec" stroke="#e4d8c0" stroke-width="0.9"/><line x1="636.00" y1="247.40" x2="646.80" y2="247.40" stroke="#d9a232" stroke-width="1.1"/><circle cx="641.50" cy="247.40" r="2.9" fill="#d9a232" stroke="#a8801e" stroke-width="0.5" stroke-opacity="0.6"/><text x="649.20" y="250.04" font-size="7.32" fill="#0a0a0a" text-anchor="start" font-weight="normal" textLength="16.62" lengthAdjust="spacingAndGlyphs">Tattoo</text><line x1="636.00" y1="257.40" x2="646.80" y2="257.40" stroke="#72b02c" stroke-width="1.1"/><circle cx="641.50" cy="257.40" r="2.9" fill="#72b02c" stroke="#4e8e22" stroke-width="0.5" stroke-opacity="0.6"/><text x="649.20" y="260.04" font-size="7.32" fill="#0a0a0a" text-anchor="start" font-weight="normal" textLength="15.60" lengthAdjust="spacingAndGlyphs">Navel</text><line x1="636.00" y1="267.40" x2="646.80" y2="267.40" stroke="#d85a2a" stroke-width="1.1"/><circle cx="641.50" cy="267.40" r="2.9" fill="#d85a2a" stroke="#9a4020" stroke-width="0.5" stroke-opacity="0.6"/><text x="649.20" y="270.04" font-size="7.32" fill="#0a0a0a" text-anchor="start" font-weight="normal" textLength="24.41" lengthAdjust="spacingAndGlyphs">Cartilage</text><line x1="636.00" y1="277.40" x2="646.80" y2="277.40" stroke="#e2ba32" stroke-width="1.1"/><circle cx="641.50" cy="277.40" r="2.9" fill="#e2ba32" stroke="#a08828" stroke-width="0.5" stroke-opacity="0.6"/><text x="649.20" y="280.04" font-size="7.32" fill="#0a0a0a" text-anchor="start" font-weight="normal" textLength="14.24" lengthAdjust="spacingAndGlyphs">Nose</text><text x="404.20" y="359.78" font-size="14.39" fill="#111" text-anchor="middle" font-weight="normal" textLength="46.58" lengthAdjust="spacingAndGlyphs">My Tips</text><rect x="156.40" y="372.00" width="429.00" height="66.40" fill="url(#pbg)" stroke="#e6d9bd" stroke-width="1"/><line x1="156.40" y1="423.62" x2="585.40" y2="423.62" stroke="#ebe1cd" stroke-width="1"/><line x1="156.40" y1="408.84" x2="585.40" y2="408.84" stroke="#ebe1cd" stroke-width="1"/><line x1="156.40" y1="394.06" x2="585.40" y2="394.06" stroke="#ebe1cd" stroke-width="1"/><line x1="156.40" y1="379.28" x2="585.40" y2="379.28" stroke="#ebe1cd" stroke-width="1"/><text x="151.00" y="441.16" font-size="7.68" fill="#0a0a0a" text-anchor="end" font-weight="normal" textLength="16.02" lengthAdjust="spacingAndGlyphs">$0.00</text><line x1="152.90" y1="438.40" x2="156.40" y2="438.40" stroke="#c9ad72" stroke-width="0.9"/><line x1="154.40" y1="435.44" x2="156.40" y2="435.44" stroke="#c9ad72" stroke-width="0.7"/><line x1="154.40" y1="432.49" x2="156.40" y2="432.49" stroke="#c9ad72" stroke-width="0.7"/><line x1="154.40" y1="429.53" x2="156.40" y2="429.53" stroke="#c9ad72" stroke-width="0.7"/><line x1="154.40" y1="426.58" x2="156.40" y2="426.58" stroke="#c9ad72" stroke-width="0.7"/><text x="151.00" y="426.38" font-size="7.68" fill="#0a0a0a" text-anchor="end" font-weight="normal" textLength="16.02" lengthAdjust="spacingAndGlyphs">$5.00</text><line x1="152.90" y1="423.62" x2="156.40" y2="423.62" stroke="#c9ad72" stroke-width="0.9"/><line x1="154.40" y1="420.66" x2="156.40" y2="420.66" stroke="#c9ad72" stroke-width="0.7"/><line x1="154.40" y1="417.71" x2="156.40" y2="417.71" stroke="#c9ad72" stroke-width="0.7"/><line x1="154.40" y1="414.75" x2="156.40" y2="414.75" stroke="#c9ad72" stroke-width="0.7"/><line x1="154.40" y1="411.80" x2="156.40" y2="411.80" stroke="#c9ad72" stroke-width="0.7"/><text x="151.00" y="411.60" font-size="7.68" fill="#0a0a0a" text-anchor="end" font-weight="normal" textLength="19.58" lengthAdjust="spacingAndGlyphs">$10.00</text><line x1="152.90" y1="408.84" x2="156.40" y2="408.84" stroke="#c9ad72" stroke-width="0.9"/><line x1="154.40" y1="405.88" x2="156.40" y2="405.88" stroke="#c9ad72" stroke-width="0.7"/><line x1="154.40" y1="402.93" x2="156.40" y2="402.93" stroke="#c9ad72" stroke-width="0.7"/><line x1="154.40" y1="399.97" x2="156.40" y2="399.97" stroke="#c9ad72" stroke-width="0.7"/><line x1="154.40" y1="397.02" x2="156.40" y2="397.02" stroke="#c9ad72" stroke-width="0.7"/><text x="151.00" y="396.82" font-size="7.68" fill="#0a0a0a" text-anchor="end" font-weight="normal" textLength="19.58" lengthAdjust="spacingAndGlyphs">$15.00</text><line x1="152.90" y1="394.06" x2="156.40" y2="394.06" stroke="#c9ad72" stroke-width="0.9"/><line x1="154.40" y1="391.10" x2="156.40" y2="391.10" stroke="#c9ad72" stroke-width="0.7"/><line x1="154.40" y1="388.15" x2="156.40" y2="388.15" stroke="#c9ad72" stroke-width="0.7"/><line x1="154.40" y1="385.19" x2="156.40" y2="385.19" stroke="#c9ad72" stroke-width="0.7"/><line x1="154.40" y1="382.24" x2="156.40" y2="382.24" stroke="#c9ad72" stroke-width="0.7"/><text x="151.00" y="382.04" font-size="7.68" fill="#0a0a0a" text-anchor="end" font-weight="normal" textLength="19.58" lengthAdjust="spacingAndGlyphs">$20.00</text><line x1="152.90" y1="379.28" x2="156.40" y2="379.28" stroke="#c9ad72" stroke-width="0.9"/><line x1="156.40" y1="372.00" x2="156.40" y2="438.40" stroke="#c9ad72" stroke-width="1.1"/><line x1="156.40" y1="438.40" x2="585.40" y2="438.40" stroke="#c9ad72" stroke-width="1.1"/><line x1="164.60" y1="438.40" x2="164.60" y2="441.40" stroke="#c9ad72" stroke-width="0.8"/><line x1="181.10" y1="438.40" x2="181.10" y2="440.40" stroke="#c9ad72" stroke-width="0.8"/><line x1="197.60" y1="438.40" x2="197.60" y2="441.40" stroke="#c9ad72" stroke-width="0.8"/><line x1="214.10" y1="438.40" x2="214.10" y2="440.40" stroke="#c9ad72" stroke-width="0.8"/><line x1="230.60" y1="438.40" x2="230.60" y2="441.40" stroke="#c9ad72" stroke-width="0.8"/><line x1="247.10" y1="438.40" x2="247.10" y2="440.40" stroke="#c9ad72" stroke-width="0.8"/><line x1="263.60" y1="438.40" x2="263.60" y2="441.40" stroke="#c9ad72" stroke-width="0.8"/><line x1="280.10" y1="438.40" x2="280.10" y2="440.40" stroke="#c9ad72" stroke-width="0.8"/><line x1="296.60" y1="438.40" x2="296.60" y2="441.40" stroke="#c9ad72" stroke-width="0.8"/><line x1="313.10" y1="438.40" x2="313.10" y2="440.40" stroke="#c9ad72" stroke-width="0.8"/><line x1="329.60" y1="438.40" x2="329.60" y2="441.40" stroke="#c9ad72" stroke-width="0.8"/><line x1="346.10" y1="438.40" x2="346.10" y2="440.40" stroke="#c9ad72" stroke-width="0.8"/><line x1="362.60" y1="438.40" x2="362.60" y2="441.40" stroke="#c9ad72" stroke-width="0.8"/><line x1="379.10" y1="438.40" x2="379.10" y2="440.40" stroke="#c9ad72" stroke-width="0.8"/><line x1="395.60" y1="438.40" x2="395.60" y2="441.40" stroke="#c9ad72" stroke-width="0.8"/><line x1="412.10" y1="438.40" x2="412.10" y2="440.40" stroke="#c9ad72" stroke-width="0.8"/><line x1="428.60" y1="438.40" x2="428.60" y2="441.40" stroke="#c9ad72" stroke-width="0.8"/><line x1="445.10" y1="438.40" x2="445.10" y2="440.40" stroke="#c9ad72" stroke-width="0.8"/><line x1="461.60" y1="438.40" x2="461.60" y2="441.40" stroke="#c9ad72" stroke-width="0.8"/><line x1="478.10" y1="438.40" x2="478.10" y2="440.40" stroke="#c9ad72" stroke-width="0.8"/><line x1="494.60" y1="438.40" x2="494.60" y2="441.40" stroke="#c9ad72" stroke-width="0.8"/><line x1="511.10" y1="438.40" x2="511.10" y2="440.40" stroke="#c9ad72" stroke-width="0.8"/><line x1="527.60" y1="438.40" x2="527.60" y2="441.40" stroke="#c9ad72" stroke-width="0.8"/><line x1="544.10" y1="438.40" x2="544.10" y2="440.40" stroke="#c9ad72" stroke-width="0.8"/><line x1="560.60" y1="438.40" x2="560.60" y2="441.40" stroke="#c9ad72" stroke-width="0.8"/><line x1="577.10" y1="438.40" x2="577.10" y2="440.40" stroke="#c9ad72" stroke-width="0.8"/><text x="164.60" y="450.34" font-size="7.61" fill="#0a0a0a" text-anchor="middle" font-weight="normal" textLength="24.21" lengthAdjust="spacingAndGlyphs">1/1/2011</text><text x="197.60" y="450.34" font-size="7.61" fill="#0a0a0a" text-anchor="middle" font-weight="normal" textLength="24.21" lengthAdjust="spacingAndGlyphs">1/3/2011</text><text x="230.60" y="450.34" font-size="7.61" fill="#0a0a0a" text-anchor="middle" font-weight="normal" textLength="24.21" lengthAdjust="spacingAndGlyphs">1/5/2011</text><text x="263.60" y="450.34" font-size="7.61" fill="#0a0a0a" text-anchor="middle" font-weight="normal" textLength="24.21" lengthAdjust="spacingAndGlyphs">1/7/2011</text><text x="296.60" y="450.34" font-size="7.61" fill="#0a0a0a" text-anchor="middle" font-weight="normal" textLength="24.21" lengthAdjust="spacingAndGlyphs">1/9/2011</text><text x="329.60" y="450.34" font-size="7.61" fill="#0a0a0a" text-anchor="middle" font-weight="normal" textLength="27.26" lengthAdjust="spacingAndGlyphs">1/11/2011</text><text x="362.60" y="450.34" font-size="7.61" fill="#0a0a0a" text-anchor="middle" font-weight="normal" textLength="27.73" lengthAdjust="spacingAndGlyphs">1/13/2011</text><text x="395.60" y="450.34" font-size="7.61" fill="#0a0a0a" text-anchor="middle" font-weight="normal" textLength="27.73" lengthAdjust="spacingAndGlyphs">1/15/2011</text><text x="428.60" y="450.34" font-size="7.61" fill="#0a0a0a" text-anchor="middle" font-weight="normal" textLength="27.73" lengthAdjust="spacingAndGlyphs">1/17/2011</text><text x="461.60" y="450.34" font-size="7.61" fill="#0a0a0a" text-anchor="middle" font-weight="normal" textLength="27.73" lengthAdjust="spacingAndGlyphs">1/19/2011</text><text x="494.60" y="450.34" font-size="7.61" fill="#0a0a0a" text-anchor="middle" font-weight="normal" textLength="27.73" lengthAdjust="spacingAndGlyphs">1/21/2011</text><text x="527.60" y="450.34" font-size="7.61" fill="#0a0a0a" text-anchor="middle" font-weight="normal" textLength="27.73" lengthAdjust="spacingAndGlyphs">1/23/2011</text><text x="560.60" y="450.34" font-size="7.61" fill="#0a0a0a" text-anchor="middle" font-weight="normal" textLength="27.73" lengthAdjust="spacingAndGlyphs">1/25/2011</text><g clip-path="url(#clip3)"><polyline points="164.60,438.40 230.60,438.40 263.60,438.40 280.10,438.40 362.60,438.40 379.10,438.40 461.60,438.40 478.10,379.28 494.60,438.40 511.10,438.40 577.10,438.40" fill="none" stroke="#d9a232" stroke-width="1.6" stroke-linejoin="round"/><circle cx="164.60" cy="438.40" r="3.1" fill="#d9a232" stroke="#b07a18" stroke-width="0.5" stroke-opacity="0.5"/><circle cx="230.60" cy="438.40" r="3.1" fill="#d9a232" stroke="#b07a18" stroke-width="0.5" stroke-opacity="0.5"/><circle cx="263.60" cy="438.40" r="3.1" fill="#d9a232" stroke="#b07a18" stroke-width="0.5" stroke-opacity="0.5"/><circle cx="280.10" cy="438.40" r="3.1" fill="#d9a232" stroke="#b07a18" stroke-width="0.5" stroke-opacity="0.5"/><circle cx="362.60" cy="438.40" r="3.1" fill="#d9a232" stroke="#b07a18" stroke-width="0.5" stroke-opacity="0.5"/><circle cx="379.10" cy="438.40" r="3.1" fill="#d9a232" stroke="#b07a18" stroke-width="0.5" stroke-opacity="0.5"/><circle cx="461.60" cy="438.40" r="3.1" fill="#d9a232" stroke="#b07a18" stroke-width="0.5" stroke-opacity="0.5"/><circle cx="478.10" cy="379.28" r="3.1" fill="#d9a232" stroke="#b07a18" stroke-width="0.5" stroke-opacity="0.5"/><circle cx="494.60" cy="438.40" r="3.1" fill="#d9a232" stroke="#b07a18" stroke-width="0.5" stroke-opacity="0.5"/><circle cx="511.10" cy="438.40" r="3.1" fill="#d9a232" stroke="#b07a18" stroke-width="0.5" stroke-opacity="0.5"/><circle cx="577.10" cy="438.40" r="3.1" fill="#d9a232" stroke="#b07a18" stroke-width="0.5" stroke-opacity="0.5"/><circle cx="214.10" cy="438.40" r="3.1" fill="#72b02c" stroke="#b07a18" stroke-width="0.5" stroke-opacity="0.5"/><circle cx="577.10" cy="438.40" r="3.1" fill="#d85a2a" stroke="#b07a18" stroke-width="0.5" stroke-opacity="0.5"/><circle cx="346.10" cy="438.40" r="3.1" fill="#e2ba32" stroke="#b07a18" stroke-width="0.5" stroke-opacity="0.5"/></g><line x1="156.40" y1="438.40" x2="585.40" y2="438.40" stroke="#c9ad72" stroke-width="1.1"/><rect x="168.40" y="426.20" width="47.21" height="8.20" fill="#fffdf8" fill-opacity="0.92" stroke="#d4b87a" stroke-width="0.9"/><text x="170.00" y="433.06" font-size="7.68" fill="#a8801e" text-anchor="start" font-weight="normal" textLength="44.01" lengthAdjust="spacingAndGlyphs">1/1/2011: $0.00</text><rect x="234.40" y="426.20" width="47.21" height="8.20" fill="#fffdf8" fill-opacity="0.92" stroke="#d4b87a" stroke-width="0.9"/><text x="236.00" y="433.06" font-size="7.68" fill="#a8801e" text-anchor="start" font-weight="normal" textLength="44.01" lengthAdjust="spacingAndGlyphs">1/5/2011: $0.00</text><rect x="267.40" y="426.20" width="47.21" height="8.20" fill="#fffdf8" fill-opacity="0.92" stroke="#d4b87a" stroke-width="0.9"/><text x="269.00" y="433.06" font-size="7.68" fill="#a8801e" text-anchor="start" font-weight="normal" textLength="44.01" lengthAdjust="spacingAndGlyphs">1/7/2011: $0.00</text><rect x="283.90" y="426.20" width="47.21" height="8.20" fill="#fffdf8" fill-opacity="0.92" stroke="#d4b87a" stroke-width="0.9"/><text x="285.50" y="433.06" font-size="7.68" fill="#a8801e" text-anchor="start" font-weight="normal" textLength="44.01" lengthAdjust="spacingAndGlyphs">1/8/2011: $0.00</text><rect x="366.40" y="426.20" width="50.77" height="8.20" fill="#fffdf8" fill-opacity="0.92" stroke="#d4b87a" stroke-width="0.9"/><text x="368.00" y="433.06" font-size="7.68" fill="#a8801e" text-anchor="start" font-weight="normal" textLength="47.57" lengthAdjust="spacingAndGlyphs">1/13/2011: $0.00</text><rect x="382.90" y="426.20" width="50.77" height="8.20" fill="#fffdf8" fill-opacity="0.92" stroke="#d4b87a" stroke-width="0.9"/><text x="384.50" y="433.06" font-size="7.68" fill="#a8801e" text-anchor="start" font-weight="normal" textLength="47.57" lengthAdjust="spacingAndGlyphs">1/14/2011: $0.00</text><rect x="465.40" y="426.20" width="50.77" height="8.20" fill="#fffdf8" fill-opacity="0.92" stroke="#d4b87a" stroke-width="0.9"/><text x="467.00" y="433.06" font-size="7.68" fill="#a8801e" text-anchor="start" font-weight="normal" textLength="47.57" lengthAdjust="spacingAndGlyphs">1/19/2011: $0.00</text><rect x="481.90" y="367.08" width="54.33" height="8.20" fill="#fffdf8" fill-opacity="0.92" stroke="#d4b87a" stroke-width="0.9"/><text x="483.50" y="373.94" font-size="7.68" fill="#a8801e" text-anchor="start" font-weight="normal" textLength="51.13" lengthAdjust="spacingAndGlyphs">1/20/2011: $20.00</text><rect x="498.40" y="426.20" width="50.77" height="8.20" fill="#fffdf8" fill-opacity="0.92" stroke="#d4b87a" stroke-width="0.9"/><text x="500.00" y="433.06" font-size="7.68" fill="#a8801e" text-anchor="start" font-weight="normal" textLength="47.57" lengthAdjust="spacingAndGlyphs">1/21/2011: $0.00</text><rect x="514.90" y="426.20" width="50.77" height="8.20" fill="#fffdf8" fill-opacity="0.92" stroke="#d4b87a" stroke-width="0.9"/><text x="516.50" y="433.06" font-size="7.68" fill="#a8801e" text-anchor="start" font-weight="normal" textLength="47.57" lengthAdjust="spacingAndGlyphs">1/22/2011: $0.00</text><rect x="580.90" y="426.20" width="50.77" height="8.20" fill="#fffdf8" fill-opacity="0.92" stroke="#d4b87a" stroke-width="0.9"/><text x="582.50" y="433.06" font-size="7.68" fill="#a8801e" text-anchor="start" font-weight="normal" textLength="47.57" lengthAdjust="spacingAndGlyphs">1/26/2011: $0.00</text><rect x="217.90" y="426.20" width="47.21" height="8.20" fill="#fffdf8" fill-opacity="0.92" stroke="#98c070" stroke-width="0.9"/><text x="219.50" y="433.06" font-size="7.68" fill="#4e8e22" text-anchor="start" font-weight="normal" textLength="44.01" lengthAdjust="spacingAndGlyphs">1/4/2011: $0.00</text><rect x="580.90" y="426.20" width="50.77" height="8.20" fill="#fffdf8" fill-opacity="0.92" stroke="#c89080" stroke-width="0.9"/><text x="582.50" y="433.06" font-size="7.68" fill="#9a4020" text-anchor="start" font-weight="normal" textLength="47.57" lengthAdjust="spacingAndGlyphs">1/26/2011: $0.00</text><rect x="349.90" y="426.20" width="50.77" height="8.20" fill="#fffdf8" fill-opacity="0.92" stroke="#d4c07a" stroke-width="0.9"/><text x="351.50" y="433.06" font-size="7.68" fill="#a08828" text-anchor="start" font-weight="normal" textLength="47.57" lengthAdjust="spacingAndGlyphs">1/12/2011: $0.00</text><rect x="634.20" y="369.50" width="40.80" height="42.50" fill="#f8f4ec" stroke="#e4d8c0" stroke-width="0.9"/><line x1="636.00" y1="375.40" x2="646.80" y2="375.40" stroke="#d9a232" stroke-width="1.1"/><circle cx="641.50" cy="375.40" r="2.9" fill="#d9a232" stroke="#a8801e" stroke-width="0.5" stroke-opacity="0.6"/><text x="649.20" y="378.04" font-size="7.32" fill="#0a0a0a" text-anchor="start" font-weight="normal" textLength="16.62" lengthAdjust="spacingAndGlyphs">Tattoo</text><line x1="636.00" y1="385.40" x2="646.80" y2="385.40" stroke="#72b02c" stroke-width="1.1"/><circle cx="641.50" cy="385.40" r="2.9" fill="#72b02c" stroke="#4e8e22" stroke-width="0.5" stroke-opacity="0.6"/><text x="649.20" y="388.04" font-size="7.32" fill="#0a0a0a" text-anchor="start" font-weight="normal" textLength="15.60" lengthAdjust="spacingAndGlyphs">Navel</text><line x1="636.00" y1="395.40" x2="646.80" y2="395.40" stroke="#d85a2a" stroke-width="1.1"/><circle cx="641.50" cy="395.40" r="2.9" fill="#d85a2a" stroke="#9a4020" stroke-width="0.5" stroke-opacity="0.6"/><text x="649.20" y="398.04" font-size="7.32" fill="#0a0a0a" text-anchor="start" font-weight="normal" textLength="24.41" lengthAdjust="spacingAndGlyphs">Cartilage</text><line x1="636.00" y1="405.40" x2="646.80" y2="405.40" stroke="#e2ba32" stroke-width="1.1"/><circle cx="641.50" cy="405.40" r="2.9" fill="#e2ba32" stroke="#a08828" stroke-width="0.5" stroke-opacity="0.6"/><text x="649.20" y="408.04" font-size="7.32" fill="#0a0a0a" text-anchor="start" font-weight="normal" textLength="14.24" lengthAdjust="spacingAndGlyphs">Nose</text></svg><div style="position:absolute;left:8.00px;top:462.00px;width:681.00px;height:14.00px;background:linear-gradient(#4a4a4a,#373737)"></div><div style="position:absolute;left:10.90px;top:465.66px;font-size:7.32px;line-height:8.78px;color:#c4c4c4;font-weight:normal;white-space:nowrap;transform:scaleX(0.8333);transform-origin:0 50%;">User: Dave</div><div style="position:absolute;left:47.10px;top:465.84px;font-size:7.00px;line-height:8.40px;color:#c4c4c4;font-weight:normal;white-space:nowrap;transform:scaleX(0.8333);transform-origin:0 50%;">Location: REV23 Development, LLC</div><svg style="position:absolute;left:680px;top:467px" width="8" height="8"><path d="M6 1 h1 v1 h-1z M4 3 h1 v1 h-1z M6 3 h1 v1 h-1z M2 5 h1 v1 h-1z M4 5 h1 v1 h-1z M6 5 h1 v1 h-1z" fill="#999"/></svg></div></body></html>
